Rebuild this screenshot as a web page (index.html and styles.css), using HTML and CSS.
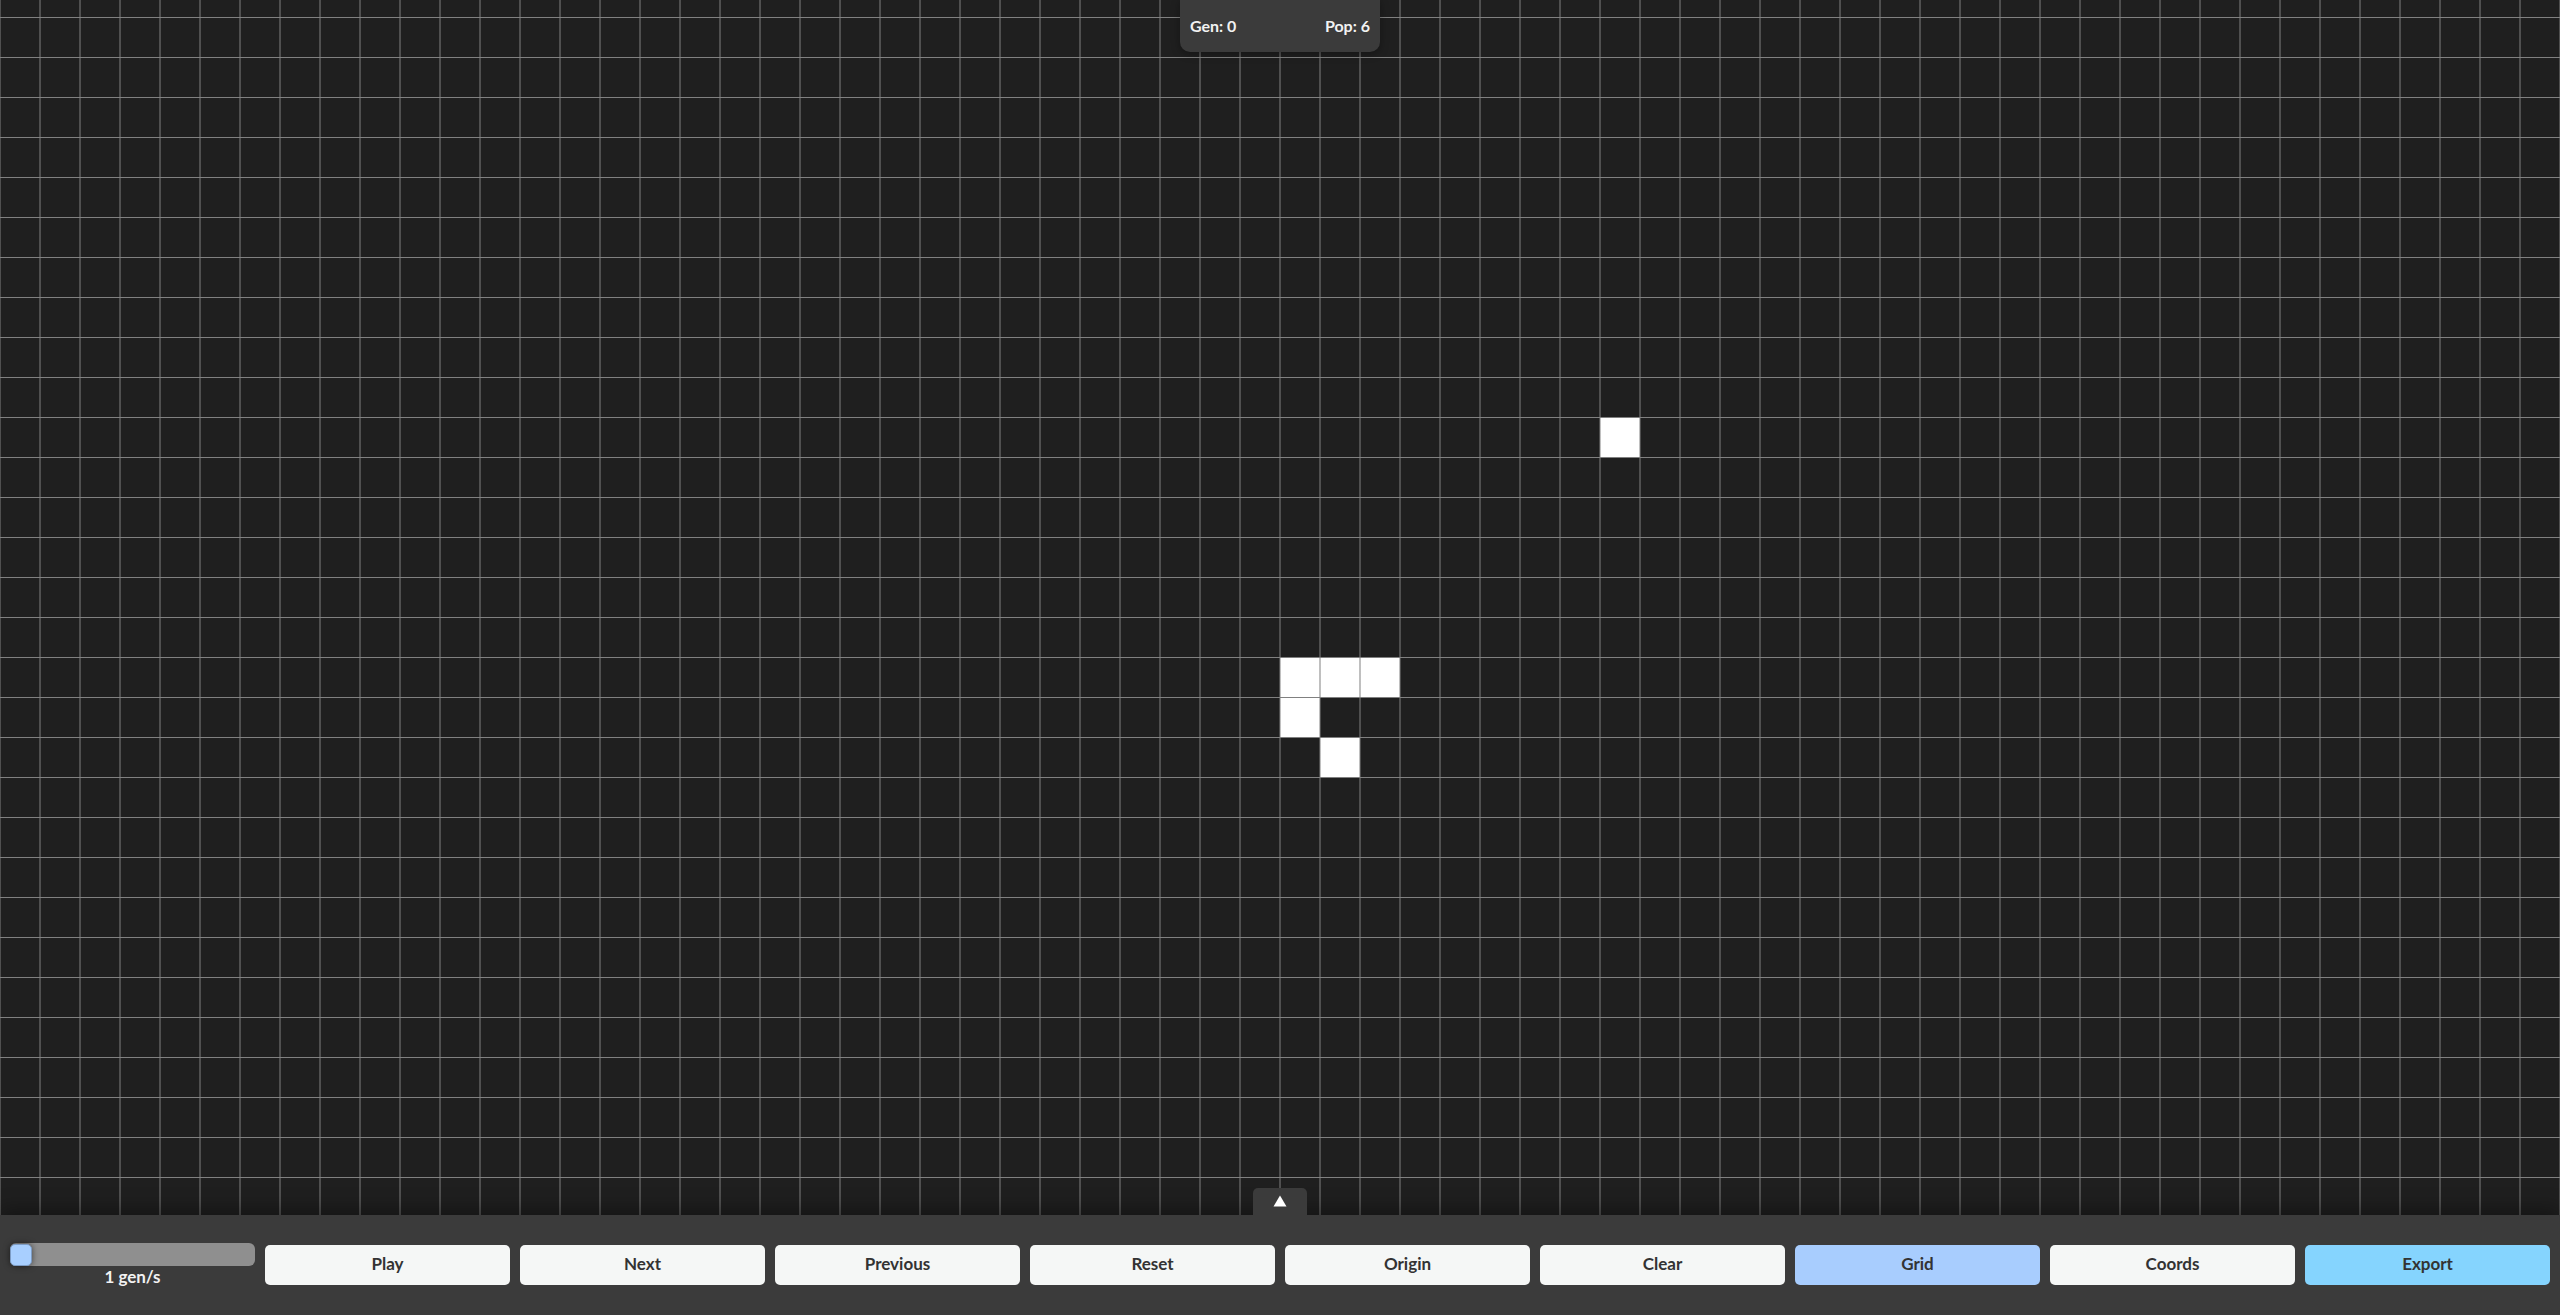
FILE: index.html
```html
<!DOCTYPE html>
<html lang="en">
<head>
<meta charset="utf-8">
<title>Game of Life</title>
<link rel="stylesheet" href="styles.css">
</head>
<body>
<div class="app">
  <div class="board">
    <div class="cell" style="left:1280px;top:657px"></div>
    <div class="cell" style="left:1320px;top:657px"></div>
    <div class="cell" style="left:1360px;top:657px"></div>
    <div class="cell" style="left:1280px;top:697px"></div>
    <div class="cell" style="left:1320px;top:737px"></div>
    <div class="cell" style="left:1600px;top:417px"></div>
    <div class="grid-lines"></div>
    <div class="stats">
      <span>Gen: 0</span>
      <span>Pop: 6</span>
    </div>
    <button class="toggle" aria-label="Toggle controls">
      <svg width="14" height="12" viewBox="0 0 14 12"><polygon points="7,0.5 13.5,11.5 0.5,11.5" fill="#ffffff"/></svg>
    </button>
  </div>
  <div class="controls">
    <div class="speed">
      <input class="slider" type="range" min="1" max="60" value="1">
      <div class="speed-label">1 gen/s</div>
    </div>
    <button class="btn">Play</button>
    <button class="btn">Next</button>
    <button class="btn">Previous</button>
    <button class="btn">Reset</button>
    <button class="btn">Origin</button>
    <button class="btn">Clear</button>
    <button class="btn btn-active">Grid</button>
    <button class="btn">Coords</button>
    <button class="btn btn-export">Export</button>
  </div>
</div>
</body>
</html>
```

FILE: styles.css
```css
* { box-sizing: border-box; }

html, body {
  margin: 0;
  padding: 0;
  height: 100%;
  overflow: hidden;
  background: #1f1f1f;
  font-family: "Lato", "Inter", "Noto Sans", sans-serif;
}

.app {
  display: flex;
  flex-direction: column;
  height: 100vh;
}

.board {
  position: relative;
  flex: 1;
  background: #1f1f1f;
  overflow: hidden;
}

.cell {
  position: absolute;
  width: 40px;
  height: 40px;
  background: #ffffff;
}

.grid-lines {
  position: absolute;
  inset: 0;
  pointer-events: none;
  background-image:
    linear-gradient(to bottom, #808080 0, #808080 1px, transparent 1px),
    linear-gradient(to right, transparent 20px, rgba(128,128,128,0.5) 20px, rgba(128,128,128,0.5) 22px, transparent 22px);
  background-size: 40px 40px, 40px 40px;
  background-position: 0 17px, 19px 0;
}

.stats {
  position: absolute;
  top: 0;
  left: 50%;
  transform: translateX(-50%);
  width: 200px;
  height: 52px;
  padding: 16px 10px 0 10px;
  display: flex;
  justify-content: space-between;
  background: #3b3b3b;
  border-radius: 0 0 10px 10px;
  box-shadow: 0 2px 8px rgba(0,0,0,0.35);
  color: #f2f2f2;
  font-weight: 700;
  font-size: 16px;
  line-height: 20px;
}

.toggle {
  position: absolute;
  bottom: 0;
  left: 50%;
  transform: translateX(-50%);
  width: 54px;
  height: 27px;
  border: 0;
  padding: 7px 0 0 0;
  margin: 0;
  background: #3b3b3b;
  border-radius: 5px 5px 0 0;
  display: flex;
  justify-content: center;
  align-items: flex-start;
  z-index: 2;
}

.controls {
  position: relative;
  height: 100px;
  flex: none;
  display: flex;
  align-items: center;
  gap: 10px;
  padding: 0 10px;
  background: #3b3b3b;
  box-shadow: 0 -6px 18px rgba(0,0,0,0.35);
  z-index: 1;
}

.speed {
  flex: 1;
  align-self: flex-start;
  padding-top: 28px;
  display: flex;
  flex-direction: column;
  align-items: center;
}

.slider {
  -webkit-appearance: none;
  appearance: none;
  width: 100%;
  height: 23px;
  margin: 0;
  background: #8f8f8f;
  border-radius: 6px;
  outline: none;
}

.slider::-webkit-slider-thumb {
  -webkit-appearance: none;
  appearance: none;
  width: 22px;
  height: 22px;
  border-radius: 5px;
  background: #a8cfff;
  border: 1px solid #7d9cc4;
  box-shadow: 0 0 6px rgba(0,0,0,0.55);
}

.speed-label {
  margin-top: 1px;
  color: #f2f2f2;
  font-weight: 700;
  font-size: 17px;
  line-height: 20px;
}

.btn {
  flex: 1;
  min-width: 0;
  height: 40px;
  border: 0;
  border-radius: 5px;
  background: #f5f7f6;
  color: #333333;
  font-family: inherit;
  font-weight: 700;
  font-size: 17px;
  line-height: 38px;
  padding: 0 0 2px 0;
}

.btn-active { background: #a8cdfe; }
.btn-export { background: #85d4fe; }
```
